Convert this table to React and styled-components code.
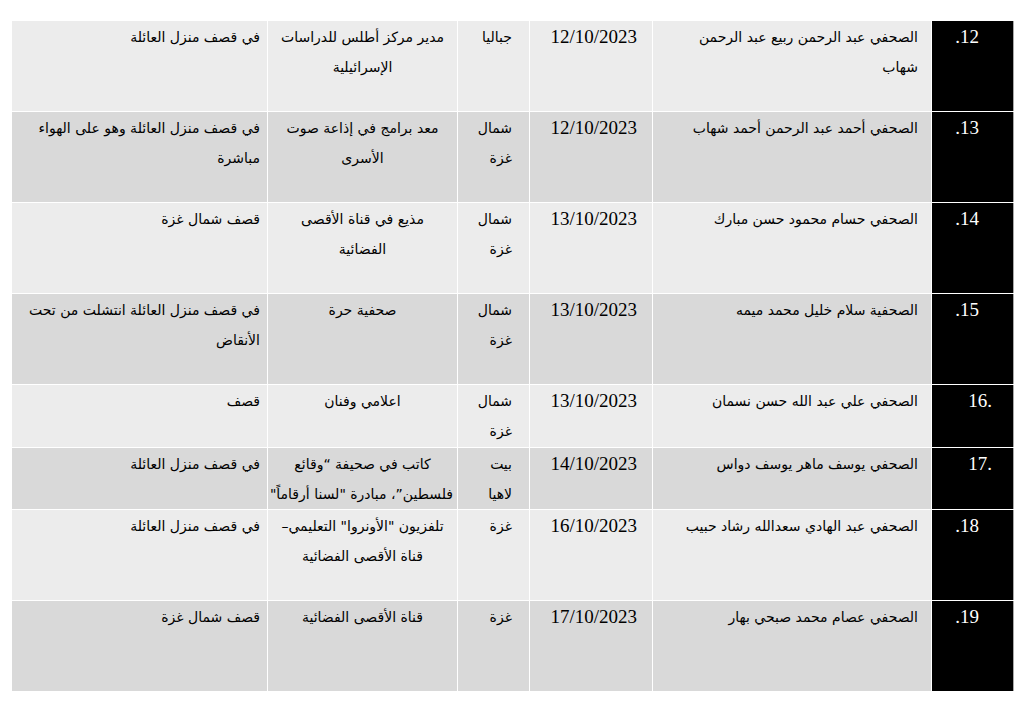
import styled, { createGlobalStyle } from "styled-components";

const GlobalStyle = createGlobalStyle`
  html, body {
    margin: 0;
    padding: 0;
    background: #ffffff;
  }
`;

const Page = styled.div`
  padding: 20px 0 0 11px;
`;

const Table = styled.table`
  direction: rtl;
  width: 1002px;
  border-collapse: collapse;
  table-layout: fixed;
  font-family: "DejaVu Sans", sans-serif;
  font-size: 14px;
  color: #000;
`;

const Col = styled.col`
  width: ${(p) => p.$w}px;
`;

const Row = styled.tr`
  background-color: ${(p) => (p.$dark ? "#d9d9d9" : "#ececec")};
  height: ${(p) => p.$height}px;
`;

const Cell = styled.td`
  border: 1px solid #ffffff;
  vertical-align: top;
  padding: 1px ${(p) => p.$padRight || 10}px 0 ${(p) => p.$padLeft || 6}px;
  text-align: ${(p) => p.$align || "right"};
  line-height: 30px;
`;

const NumCell = styled.td`
  background-color: #000;
  color: #fff;
  border: 1px solid #ffffff;
  border-right: 1px solid #a8a8a8;
  vertical-align: top;
  text-align: right;
  padding: 1px ${(p) => (p.$ltr ? 21 : 34)}px 0 0;
  font-family: "Liberation Serif", serif;
  font-size: 19px;
  line-height: 30px;
`;

const DateText = styled.span`
  direction: ltr;
  unicode-bidi: isolate;
  font-family: "Liberation Serif", serif;
  font-size: 19px;
`;

const Line = styled.div`
  white-space: nowrap;
  padding-right: ${(p) => p.$shift || 0}px;
`;

const columns = [82, 279, 123, 72, 190, 256];

const rows = [
  {
    n: "12.",
    name: ["الصحفي عبد الرحمن ربيع عبد الرحمن", "شهاب"],
    date: "12/10/2023",
    place: ["جباليا"],
    job: ["مدير مركز أطلس للدراسات", "الإسرائيلية"],
    cause: ["في قصف منزل العائلة"],
    h: 91,
  },
  {
    n: "13.",
    name: ["الصحفي أحمد عبد الرحمن أحمد شهاب"],
    date: "12/10/2023",
    place: ["شمال", "غزة"],
    job: ["معد برامج في إذاعة صوت", "الأسرى"],
    cause: ["في قصف منزل العائلة وهو على الهواء", "مباشرة"],
    h: 91,
  },
  {
    n: "14.",
    name: ["الصحفي حسام محمود حسن مبارك"],
    date: "13/10/2023",
    place: ["شمال", "غزة"],
    job: ["مذيع في قناة الأقصى", "الفضائية"],
    cause: ["قصف شمال غزة"],
    h: 91,
  },
  {
    n: "15.",
    name: ["الصحفية سلام خليل محمد ميمه"],
    date: "13/10/2023",
    place: ["شمال", "غزة"],
    job: ["صحفية حرة"],
    cause: ["في قصف منزل العائلة انتشلت من تحت", "الأنقاض"],
    h: 91,
  },
  {
    n: "16.",
    ltr: true,
    name: ["الصحفي علي عبد الله حسن نسمان"],
    date: "13/10/2023",
    place: ["شمال", "غزة"],
    job: ["اعلامي وفنان"],
    cause: ["قصف"],
    h: 63,
  },
  {
    n: "17.",
    ltr: true,
    name: ["الصحفي يوسف ماهر يوسف دواس"],
    date: "14/10/2023",
    place: ["بيت", "لاهيا"],
    job: ["كاتب في صحيفة “وقائع", "فلسطين”، مبادرة \"لسنا أرقاماً\""],
    cause: ["في قصف منزل العائلة"],
    h: 62,
  },
  {
    n: "18.",
    name: ["الصحفي عبد الهادي سعدالله رشاد حبيب"],
    date: "16/10/2023",
    place: ["غزة"],
    job: ["تلفزيون \"الأونروا\" التعليمي–", "قناة الأقصى الفضائية"],
    cause: ["في قصف منزل العائلة"],
    h: 91,
  },
  {
    n: "19.",
    name: ["الصحفي عصام محمد صبحي بهار"],
    date: "17/10/2023",
    place: ["غزة"],
    job: ["قناة الأقصى الفضائية"],
    cause: ["قصف شمال غزة"],
    h: 91,
  },
];

function Lines({ items }) {
  return items.map((t, i) => <Line key={i}>{t}</Line>);
}

export default function App() {
  return (
    <>
      <GlobalStyle />
      <Page>
        <Table>
          <colgroup>
            {columns.map((w, i) => (
              <Col key={i} $w={w} />
            ))}
          </colgroup>
          <tbody>
            {rows.map((r, i) => (
              <Row key={r.n} $dark={i % 2 === 1} $height={r.h}>
                <NumCell $ltr={r.ltr} dir={r.ltr ? "ltr" : "rtl"}>
                  {r.n}
                </NumCell>
                <Cell $padRight={13}>
                  <Lines items={r.name} />
                </Cell>
                <Cell $padRight={15}>
                  <DateText>{r.date}</DateText>
                </Cell>
                <Cell $padRight={17}>
                  <Lines items={r.place} />
                </Cell>
                <Cell $align="center" $padRight={4} $padLeft={4}>
                  <Lines items={r.job} />
                </Cell>
                <Cell $padRight={7}>
                  <Lines items={r.cause} />
                </Cell>
              </Row>
            ))}
          </tbody>
        </Table>
      </Page>
    </>
  );
}
